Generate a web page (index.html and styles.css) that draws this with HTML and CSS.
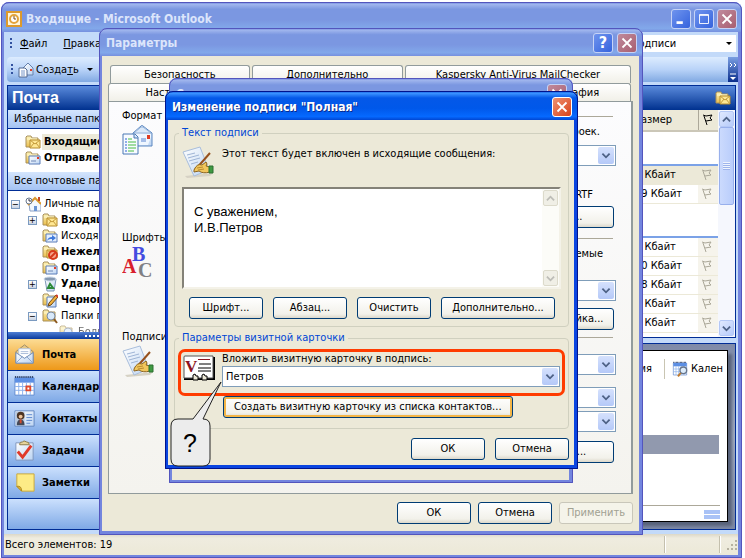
FILE: index.html
```
<!DOCTYPE html>
<html lang="ru">
<head>
  <meta charset="utf-8">
  <title>Входящие - Microsoft Outlook</title>
  <link rel="stylesheet" href="styles.css">
</head>
<body>
  <svg class="sprite" aria-hidden="true">
    <defs>
      <linearGradient id="gFolder" x1="0" y1="0" x2="0" y2="1"><stop offset="0" stop-color="#fdf3b8"/><stop offset="1" stop-color="#e9bd4c"/></linearGradient>
      <linearGradient id="gPaper" x1="0" y1="0" x2="1" y2="1"><stop offset="0" stop-color="#ffffff"/><stop offset="1" stop-color="#bcd4f2"/></linearGradient>
    </defs>
    <symbol id="i-folder" viewBox="0 0 16 16">
      <path d="M1 13V3l1-1h4l1 2h6v9z" fill="url(#gFolder)" stroke="#a8905c"/>
      <path d="M2 5h10" stroke="#fff8d0"/>
    </symbol>
    <symbol id="i-inbox" viewBox="0 0 16 16">
      <use href="#i-folder"/>
      <path d="M5 6h10v8H5z" fill="#ffe793" stroke="#b58a2a"/>
      <path d="M5 6l5 4 5-4M5 14l4-5M15 14l-4-5" fill="none" stroke="#c49a3a"/>
    </symbol>
    <symbol id="i-sent" viewBox="0 0 16 16">
      <use href="#i-folder"/>
      <path d="M4 6h11v8H4z" fill="url(#gPaper)" stroke="#5b7db8"/>
      <path d="M12 7h2v2h-2z" fill="#e0402a"/>
      <path d="M6 11h5" stroke="#6d86b5"/>
    </symbol>
    <symbol id="i-outbox" viewBox="0 0 16 16">
      <use href="#i-folder"/>
      <path d="M4 6h11v8H4z" fill="#e4effd" stroke="#5b7db8"/>
      <path d="M5 13c1-3 2-4 5-4V7l4 3-4 3v-2c-2 0-3 0-5 2z" fill="#3f79dc"/>
    </symbol>
    <symbol id="i-junk" viewBox="0 0 16 16">
      <use href="#i-inbox"/>
      <circle cx="11" cy="11" r="4" fill="#f6a58d" stroke="#d63a1c" stroke-width="2"/>
      <path d="M8 14l6-6" stroke="#d63a1c" stroke-width="2"/>
    </symbol>
    <symbol id="i-trash" viewBox="0 0 16 16">
      <path d="M3 3h11l-2 12H5z" fill="url(#gPaper)" stroke="#7d96b8"/>
      <ellipse cx="8" cy="3" rx="6" ry="2" fill="#8699b2" stroke="#c9d8ea"/>
      <path d="M6 12l2-4 3 4z" fill="none" stroke="#2d8a3a" stroke-width="2"/>
    </symbol>
    <symbol id="i-draft" viewBox="0 0 16 16">
      <use href="#i-folder"/>
      <path d="M5 5h9v10H5z" fill="url(#gPaper)" stroke="#5b7db8"/>
      <path d="M14 3l2 2-7 8-3 1 1-3z" fill="#f2b13c" stroke="#6d4a1a"/>
      <path d="M14 3l2 2" stroke="#d23c2a" stroke-width="2"/>
    </symbol>
    <symbol id="i-search" viewBox="0 0 16 16">
      <use href="#i-folder"/>
      <circle cx="9" cy="8" r="4" fill="#d8e9fb" stroke="#7b8ba0"/>
      <path d="M12 11l3 4" stroke="#8c5a20" stroke-width="2"/>
    </symbol>
    <symbol id="i-home" viewBox="0 0 16 16">
      <path d="M4 8l6-6 6 6v7H5z" fill="#f4f8ff" stroke="#8aa0c4"/>
      <path d="M3 9l7-7 6 6" fill="none" stroke="#dc9a2e" stroke-width="2"/>
      <path d="M9 10h3v5H9z" fill="#6a94d4"/>
      <path d="M13 1h2v4h-2z" fill="#c84a28"/>
      <circle cx="4" cy="5" r="3" fill="#fff" stroke="#66758c"/>
      <path d="M4 3v2h2" fill="none" stroke="#334"/>
    </symbol>
    <symbol id="i-newmail" viewBox="0 0 16 16">
      <path d="M5 6l5-5 5 5v7H5z" fill="url(#gPaper)" stroke="#6681ac"/>
      <path d="M12 7h2v2h-2z" fill="#e0402a"/>
      <path d="M1 6h6l2 2v7H1z" fill="#fff" stroke="#4e6791"/>
      <path d="M3 9h4M3 11h4M3 13h4" stroke="#7796c8"/>
    </symbol>
    <symbol id="i-format" viewBox="0 0 32 32">
      <path d="M11 9l8-7q1-1 2 0l9 7v13H11z" fill="url(#gPaper)" stroke="#5c87c0"/>
      <path d="M12 9l7-6h2l8 6z" fill="#dbe8f8" stroke="#92b2da"/>
      <path d="M12 10h17v3l-3 8H12z" fill="#eff6ff"/>
      <path d="M25 11h3v4h-3z" fill="#e03c22"/>
      <path d="M19 15h5M19 17h5" stroke="#5b83cf"/>
      <path d="M1 10h12l3 3v17H1z" fill="#f8fbff" stroke="#4b78b4"/>
      <path d="M12 10v4h4" fill="#cfe0f5" stroke="#4b78b4"/>
      <path d="M3 15h2M3 18h2M3 21h2M3 24h2M3 27h2" stroke="#2a62d4"/>
      <path d="M6 15h4M6 18h8M6 21h8M6 24h8M6 27h6" stroke="#49bd43"/>
    </symbol>
    <symbol id="i-sign" viewBox="0 0 32 32">
      <path d="M3 30L31 27 28 30 5 32z" fill="#d6d2c4"/>
      <path d="M1 6L18 1l9 23-15 6z" fill="url(#gPaper)" stroke="#a9bedb"/>
      <path d="M5 9l8-2M6 12l11-3M7 15l11-3M9 18l7-2" stroke="#9fb5d6"/>
      <path d="M28 7L13 24" stroke="#96501c" stroke-width="2"/>
      <path d="M12 24q3-7 8-5l4-3q2 2 0 4l4 1v5q-7 2-11-1l-5 1z" fill="#f1c65c" stroke="#8c6420"/>
      <path d="M15 22l6-1M16 24l6-1" stroke="#b98a30"/>
      <path d="M27 20h4v7h-4z" fill="#3f9a42" stroke="#2c6e30"/>
    </symbol>
    <symbol id="i-mail" viewBox="0 0 24 24">
      <path d="M3 9l9-7 9 7v12H3z" fill="#e6c886" stroke="#9b8a68"/>
      <path d="M6 6h12v10H6z" fill="#fff" stroke="#b9c7dc"/>
      <path d="M8 9h8M8 11h8" stroke="#a9bbd8"/>
      <path d="M3 10l9 6 9-6v11H3z" fill="url(#gPaper)" stroke="#6f8bb5"/>
      <path d="M3 21l7-7M21 21l-7-7" stroke="#8ba6ce"/>
    </symbol>
    <symbol id="i-cal" viewBox="0 0 24 24">
      <path d="M2 3h20v18H2z" fill="#fff" stroke="#5f8ad0"/>
      <path d="M2 3h20v5H2z" fill="#5c8fe4"/>
      <path d="M2 2h20" stroke="#26375c" stroke-width="2" stroke-dasharray="1 1"/>
      <path d="M6 8v13M10 8v13M14 8v13M18 8v13M2 12h20M2 16h20" stroke="#8db2ec"/>
      <path d="M14 12h4v4h-4z" fill="#fff" stroke="#e0482a" stroke-width="2"/>
    </symbol>
    <symbol id="i-contact" viewBox="0 0 24 24">
      <path d="M2 4h20v16H2z" fill="url(#gPaper)" stroke="#6287c0"/>
      <path d="M3 5h9v14H3z" fill="#b8c9df"/>
      <circle cx="8" cy="9" r="4" fill="#4d3524"/>
      <circle cx="8" cy="10" r="2" fill="#edc39a"/>
      <path d="M4 19q0-6 4-6t4 6z" fill="#444a58"/>
      <path d="M7 13h2v4H7z" fill="#d44a2a"/>
      <path d="M14 8h6M14 11h6M14 14h6M14 17h4" stroke="#5f8ad0"/>
    </symbol>
    <symbol id="i-task" viewBox="0 0 24 24">
      <path d="M3 4h18v18H3z" fill="url(#gPaper)" stroke="#7f97bd"/>
      <path d="M7 5q0-2 3-2 1-2 4 0 3 0 3 3H7z" fill="#e6d49a" stroke="#8c7a48"/>
      <path d="M5 13l5 6L19 7" fill="none" stroke="#e03a2a" stroke-width="3"/>
    </symbol>
    <symbol id="i-note" viewBox="0 0 24 24">
      <path d="M4 3h18v18H9l-5-5z" fill="#fdeb86" stroke="#caa73a"/>
      <path d="M4 16q5-1 5 5z" fill="#e2b932" stroke="#b08a22"/>
    </symbol>
    <symbol id="i-flag" viewBox="0 0 12 12">
      <path d="M1 1l3 1 6-1-2 3 2 2-6 1M2 2l3 9" fill="none" stroke="currentColor"/>
    </symbol>
    <symbol id="i-chev" viewBox="0 0 10 10">
      <path d="M1 3l4 4 4-4" fill="none" stroke="#4d6185" stroke-width="2"/>
    </symbol>
    <symbol id="i-x" viewBox="0 0 20 20">
      <path d="M5 5l10 10M15 5L5 15" stroke="#fff" stroke-width="2"/>
    </symbol>
  </svg>

  <div class="desktop">
    <!-- main Outlook window -->
    <div class="window outlook">
      <div class="titlebar">
        <svg class="app-icon" viewBox="0 0 16 16"><rect x="1" y="1" width="14" height="14" fill="#fff6dc" stroke="#dd9a2c" stroke-width="2"/><circle cx="8" cy="8" r="4" fill="#fff" stroke="#e3a43c" stroke-width="2"/><path d="M8 5v3h2" fill="none" stroke="#7a4a10"/></svg>
        <h1>Входящие - Microsoft Outlook</h1>
        <button class="sysbtn" aria-label="Свернуть"><svg viewBox="0 0 20 20"><path d="M5 14h7" stroke="#fff" stroke-width="3"/></svg></button>
        <button class="sysbtn" aria-label="Развернуть"><svg viewBox="0 0 20 20"><path d="M5 5h10v10H5zM5 6h10" fill="none" stroke="#fff"/></svg></button>
        <button class="sysbtn close" aria-label="Закрыть"><svg viewBox="0 0 20 20"><use href="#i-x"/></svg></button>
      </div>
      <div class="menubar">
        <span class="handle"></span>
        <a href="#"><u>Ф</u>айл</a>
        <a href="#"><u>П</u>равка</a>
        <div class="question">
          <input type="text" value="подписи" aria-label="Введите вопрос">
          <span class="tri"></span>
        </div>
      </div>
      <div class="toolbar">
        <span class="handle"></span>
        <button class="tool"><svg class="ico16"><use href="#i-newmail"/></svg><span>Созда<u>т</u>ь</span></button>
        <span class="tri"></span>
        <svg class="more" viewBox="0 0 10 25"><path d="M2 6l2 2-2 2M6 6l2 2-2 2" fill="none" stroke="#fff"/><path d="M2 17h6" stroke="#fff"/><path d="M2 20h6l-3 3z" fill="#fff"/></svg>
      </div>

      <div class="workspace">
        <div class="sidebar">
          <h2>Почта</h2>
          <h3>Избранные папки</h3>
          <ul class="favorites">
            <li class="current"><svg class="ico16"><use href="#i-inbox"/></svg><b>Входящие</b></li>
            <li><svg class="ico16"><use href="#i-sent"/></svg><b>Отправленные</b></li>
          </ul>
          <h3>Все почтовые папки</h3>
          <ul class="tree">
            <li class="root"><button class="toggle" aria-label="Свернуть">−</button><svg class="ico16"><use href="#i-home"/></svg>Личные папки</li>
            <li><button class="toggle" aria-label="Развернуть">+</button><svg class="ico16"><use href="#i-inbox"/></svg><b>Входящие</b></li>
            <li class="leaf"><svg class="ico16"><use href="#i-outbox"/></svg>Исходящие</li>
            <li class="leaf"><svg class="ico16"><use href="#i-junk"/></svg><b>Нежелательная</b></li>
            <li class="leaf"><svg class="ico16"><use href="#i-sent"/></svg><b>Отправленные</b></li>
            <li><button class="toggle" aria-label="Развернуть">+</button><svg class="ico16"><use href="#i-trash"/></svg><b>Удаленные</b></li>
            <li class="leaf"><svg class="ico16"><use href="#i-draft"/></svg><b>Черновики</b></li>
            <li><button class="toggle" aria-label="Свернуть">−</button><svg class="ico16"><use href="#i-search"/></svg>Папки поиска</li>
            <li class="deep"><svg class="ico16"><use href="#i-search"/></svg>Большие</li>
          </ul>
          <div class="splitter"></div>
          <nav>
            <a href="#" class="active"><svg><use href="#i-mail"/></svg>Почта</a>
            <a href="#"><svg><use href="#i-cal"/></svg>Календарь</a>
            <a href="#"><svg><use href="#i-contact"/></svg>Контакты</a>
            <a href="#"><svg><use href="#i-task"/></svg>Задачи</a>
            <a href="#"><svg><use href="#i-note"/></svg>Заметки</a>
          </nav>
          <div class="nav-foot"></div>
        </div>

        <div class="content">
          <div class="pane list-pane">
            <div class="pane-head"><svg class="ico16"><use href="#i-inbox"/></svg></div>
            <div class="list">
              <table>
                <thead>
                  <tr><th>Размер</th><th class="flag"><svg><use href="#i-flag"/></svg></th></tr>
                </thead>
                <tbody>
                  <tr class="group"><td colspan="2"></td></tr>
                  <tr class="selected"><td>5 Кбайт</td><td class="flag"><svg><use href="#i-flag"/></svg></td></tr>
                  <tr><td>19 Кбайт</td><td class="flag"><svg><use href="#i-flag"/></svg></td></tr>
                  <tr class="group"><td colspan="2"></td></tr>
                  <tr><td>5 Кбайт</td><td class="flag"><svg><use href="#i-flag"/></svg></td></tr>
                  <tr><td>10 Кбайт</td><td class="flag"><svg><use href="#i-flag"/></svg></td></tr>
                  <tr><td>18 Кбайт</td><td class="flag"><svg><use href="#i-flag"/></svg></td></tr>
                  <tr><td>5 Кбайт</td><td class="flag"><svg><use href="#i-flag"/></svg></td></tr>
                  <tr><td>5 Кбайт</td><td class="flag"><svg><use href="#i-flag"/></svg></td></tr>
                </tbody>
              </table>
              <div class="scroll">
                <span class="sb up"><svg><use href="#i-chev"/></svg></span>
                <span class="thumb"></span>
                <span class="sb"><svg><use href="#i-chev"/></svg></span>
              </div>
            </div>
          </div>
          <div class="pane reading">
            <div class="page">
              <div class="page-tools">
                <span>Время</span>
                <i></i>
                <svg class="ico16" viewBox="0 0 24 24"><use href="#i-cal"/><circle cx="17" cy="14" r="5" fill="#dcecfb" stroke="#66758c" stroke-width="2"/><path d="M13 18l-4 5" stroke="#c07a2a" stroke-width="3"/></svg>
                <span>Кален</span>
              </div>
              <div class="band"></div>
              <div class="page-foot"><i></i><i></i></div>
            </div>
          </div>
        </div>
      </div>

      <div class="statusbar">
        <span>Всего элементов: 19</span>
        <i class="sep"></i><i class="sep"></i>
        <svg class="grip" viewBox="0 0 12 12"><path d="M9 2h2M5 6h2M9 6h2M1 10h2M5 10h2M9 10h2" stroke="#b5b1a0" stroke-width="2"/></svg>
      </div>
    </div>

    <!-- options dialog -->
    <div class="window options">
      <div class="titlebar">
        <h1>Параметры</h1>
        <button class="sysbtn" aria-label="Справка"><b>?</b></button>
        <button class="sysbtn close" aria-label="Закрыть"><svg viewBox="0 0 20 20"><use href="#i-x"/></svg></button>
      </div>
      <div class="dialog-body">
        <div class="tabs">
          <button>Безопасность</button>
          <button class="mid">Дополнительно</button>
          <button class="wide">Kaspersky Anti-Virus MailChecker</button>
        </div>
        <div class="tabs second">
          <button>Настройка</button>
          <button>Почта</button>
          <button>Сообщение</button>
          <button>Орфография</button>
        </div>
        <div class="tab-page">
          <section>
            <h4>Формат сообщения</h4>
            <div class="row">
              <svg class="ico32"><use href="#i-format"/></svg>
              <div class="fields">
                <label class="note" for="fmt">настроек.</label>
                <span class="combo short"><select id="fmt"><option></option></select><svg><use href="#i-chev"/></svg></span>
                <p class="note rtf">RTF</p>
                <button class="btn">Шрифт...</button>
              </div>
            </div>
          </section>
          <section>
            <h4>Шрифты</h4>
            <div class="row">
              <svg class="ico32 abc" viewBox="0 0 32 32" aria-hidden="true">
                <text class="blue" x="10" y="15">B</text>
                <text class="gray" x="16" y="31">C</text>
                <text class="red" x="0" y="27">A</text>
              </svg>
              <div class="fields">
                <label class="note used" for="fnt">используемые</label>
                <span class="combo short"><select id="fnt"><option></option></select><svg><use href="#i-chev"/></svg></span>
                <button class="btn setup">Настройка...</button>
              </div>
            </div>
          </section>
          <section>
            <h4>Подписи</h4>
            <div class="row">
              <svg class="ico32"><use href="#i-sign"/></svg>
              <div class="fields signs">
                <span class="combo short"><select aria-label="Учетная запись"><option></option></select><svg><use href="#i-chev"/></svg></span>
                <span class="combo short first"><select aria-label="Новые сообщения"><option></option></select><svg><use href="#i-chev"/></svg></span>
                <span class="combo short"><select aria-label="Ответы и пересылка"><option></option></select><svg><use href="#i-chev"/></svg></span>
                <button class="btn">Подписи...</button>
              </div>
            </div>
          </section>
        </div>
        <div class="buttons">
          <button class="btn">ОК</button>
          <button class="btn">Отмена</button>
          <button class="btn" disabled>Применить</button>
        </div>
      </div>
    </div>

    <!-- signature list, mostly covered -->
    <div class="window signatures">
      <div class="titlebar">
        <h1>Создание</h1>
        <button class="sysbtn close" aria-label="Закрыть"><svg viewBox="0 0 20 20"><use href="#i-x"/></svg></button>
      </div>
      <div class="dialog-body"></div>
    </div>

    <!-- edit signature -->
    <div class="window edit">
      <div class="titlebar">
        <h1>Изменение подписи "Полная"</h1>
        <button class="sysbtn close" aria-label="Закрыть"><svg viewBox="0 0 20 20"><use href="#i-x"/></svg></button>
      </div>
      <div class="dialog-body">
        <fieldset class="text-group">
          <legend>Текст подписи</legend>
          <div class="row">
            <svg class="ico32"><use href="#i-sign"/></svg>
            <label for="sign">Этот текст будет включен в исходящие сообщения:</label>
          </div>
          <div class="editor">
            <textarea id="sign">С уважением,
И.В.Петров</textarea>
            <div class="scroll off">
              <span class="sb up"><svg><use href="#i-chev"/></svg></span>
              <span class="track"></span>
              <span class="sb"><svg><use href="#i-chev"/></svg></span>
            </div>
          </div>
          <div class="btn-row">
            <button class="btn">Шрифт...</button>
            <button class="btn">Абзац...</button>
            <button class="btn">Очистить</button>
            <button class="btn grow">Дополнительно...</button>
          </div>
        </fieldset>
        <fieldset class="card-group">
          <legend>Параметры визитной карточки</legend>
          <div class="highlight">
            <svg class="vcard" viewBox="0 0 32 26" aria-hidden="true">
              <path d="M31 2v22H1" fill="none" stroke="#000" stroke-width="2"/>
              <path d="M1 2q0-1 1-1h28v22H1z" fill="#fff" stroke="#555"/>
              <path d="M10 25v-5l2-1 1 2h2v4zM19 25v-5l2-1 1 2h2v4z" fill="#ece9d8" stroke="#000"/>
              <text x="2" y="17">V</text>
              <path d="M15 5l1-1 1 1 1-1 1 1 1-1 1 1 1-1 1 1 1-1 1 1 1-1 1 1" fill="none" stroke="#8c1420"/>
              <path d="M16 9h12M15 13h13M15 16h13" stroke="#000"/>
            </svg>
            <div class="card-field">
              <label for="card">Вложить визитную карточку в подпись:</label>
              <span class="combo"><select id="card"><option>Петров</option></select><svg><use href="#i-chev"/></svg></span>
            </div>
          </div>
          <button class="btn default">Создать визитную карточку из списка контактов...</button>
        </fieldset>
        <div class="buttons">
          <button class="btn">ОК</button>
          <button class="btn">Отмена</button>
        </div>
      </div>
      <div class="callout">
        <svg viewBox="0 0 54 86"><path d="M8 38H23L51 1 33 38Q40 38 40 45V78Q40 85 33 85H8Q1 85 1 78V45Q1 38 8 38z" fill="#ececec" stroke="#222"/></svg>
        <span>?</span>
      </div>
    </div>
  </div>
</body>
</html>
```
FILE: styles.css
```
* {
  margin: 0;
  padding: 0;
  box-sizing: border-box;
}

body {
  font-family: "DejaVu Sans Condensed", "DejaVu Sans", sans-serif;
  font-size: 11px;
  line-height: 16px;
  color: #000;
  background: #fff;
}

button, input, select, textarea {
  font: inherit;
  color: inherit;
  border: 0;
  background: none;
}

a {
  color: inherit;
  text-decoration: none;
}

ul {
  list-style: none;
}

h1, h2, h3, h4, p {
  font-size: inherit;
  font-weight: normal;
}

svg {
  display: block;
  flex: none;
}

.sprite {
  position: absolute;
  width: 0;
  height: 0;
}

.ico16 { width: 16px; height: 16px; }
.ico32 { width: 32px; height: 32px; }

.abc { font: bold 20px "Liberation Serif", serif; }
.abc .blue { fill: #444ce0; }
.abc .gray { fill: #808084; }
.abc .red { fill: #d8202c; }

.desktop {
  position: relative;
  min-height: 100vh;
  padding: 2px 3px 1px 1px;
  display: flex;
  overflow: hidden;
}

/* windows */
.window {
  border: solid #7385de;
  border-width: 0 4px 4px 3px;
  border-radius: 8px 8px 0 0;
  outline: 1px solid #5355bd;
  outline-offset: -1px;
  background: #ece9d8;
}

.titlebar {
  display: flex;
  align-items: center;
  gap: 4px;
  height: 29px;
  margin: 0 -4px 0 -3px;
  padding: 2px 6px 0 7px;
  border-radius: 8px 8px 0 0;
  background: linear-gradient(#6680dc, #9fb5ed 8%, #7b97e1 24%, #7b97e1 60%, #82a8ea 88%, #7690de);
}

.titlebar h1 {
  flex: 1;
  font-size: 12px;
  font-weight: bold;
  color: #dce5fb;
  white-space: nowrap;
}

.sysbtn {
  width: 20px;
  height: 20px;
  border: 1px solid #c6d3f6;
  border-radius: 3px;
  background: linear-gradient(135deg, #6f94ee, #3563dd);
  color: #fff;
  font-size: 16px;
}

.sysbtn svg {
  width: 18px;
  height: 18px;
}

.sysbtn.close {
  background: linear-gradient(135deg, #c08a9c, #a85f70);
}

/* outlook */
.outlook {
  flex: 1;
  min-width: 0;
  display: flex;
  flex-direction: column;
  border-bottom-width: 3px;
  background: #c3daf9;
}

.outlook > .titlebar {
  height: 30px;
  padding: 4px 5px 0 5px;
}

.outlook .sysbtn { margin-left: -1px; }

.app-icon { width: 16px; height: 16px; }

.menubar {
  display: flex;
  align-items: center;
  height: 25px;
  padding: 0 2px 2px 6px;
  gap: 16px;
  background: #c3daf9;
}

.menubar .handle { margin-right: -8px; }

.handle {
  width: 2px;
  height: 12px;
  background: repeating-linear-gradient(#31519f 0 2px, transparent 2px 4px);
}

.question {
  display: flex;
  align-items: center;
  width: 110px;
  height: 17px;
  margin-left: auto;
  padding: 0 4px 0 6px;
  background: #fff;
}

.question input {
  flex: 1;
  min-width: 0;
}

.tri {
  border: 3px solid transparent;
  border-top-color: #000;
  border-bottom: 0;
}

.toolbar {
  display: flex;
  align-items: center;
  gap: 5px;
  height: 25px;
  margin-left: 3px;
  padding-left: 4px;
  border-radius: 4px 0 0 4px;
  background: linear-gradient(#ddecfe, #b9d3f8 50%, #81a9e2);
}

.tool {
  display: flex;
  align-items: center;
  gap: 2px;
  padding-right: 3px;
}

.toolbar .more {
  width: 10px;
  height: 25px;
  margin-left: auto;
  background: linear-gradient(#7a9fe2, #0a2d8c);
}

.workspace {
  flex: 1;
  display: grid;
  grid-template-columns: 190px 1fr;
  gap: 5px;
  padding: 3px 2px 4px 3px;
}

.sidebar, .pane {
  border: 1px solid #002d96;
}

.sidebar {
  display: flex;
  flex-direction: column;
  background: #fff;
}

.sidebar h2, .pane-head {
  height: 24px;
  background: linear-gradient(#5a8adb, #00318f);
}

.sidebar h2 {
  padding-left: 4px;
  font: bold 16px/24px "Liberation Sans", Arial, sans-serif;
  color: #fff;
}

.sidebar h3 {
  height: 19px;
  padding: 1px 6px 0;
  border-bottom: 1px solid #002d96;
  background: linear-gradient(#d4e5fd, #a4c3f3);
}

.favorites {
  padding: 5px 0 6px 17px;
}

.favorites li, .tree li {
  display: flex;
  align-items: center;
  height: 16px;
  white-space: nowrap;
}

.favorites b {
  margin-left: 1px;
  padding-left: 2px;
}

.favorites .current b {
  flex: 1;
  background: #ece9d8;
}

.tree {
  flex: 1 1 0;
  min-height: 141px;
  padding-top: 5px;
  overflow: hidden;
}

.tree li {
  gap: 3px;
  padding-left: 20px;
}

.tree li.root { padding-left: 3px; }
.tree li.leaf { padding-left: 34px; }
.tree li.deep { padding-left: 51px; opacity: 0.6; }

.toggle {
  width: 9px;
  height: 9px;
  margin-right: 2px;
  border: 1px solid #7b9ac0;
  background: linear-gradient(#fff, #c9d3e2);
  font-size: 9px;
  line-height: 7px;
}

.splitter {
  height: 7px;
  background:
    repeating-linear-gradient(90deg, #fff 0 2px, transparent 2px 4px) center / 34px 2px no-repeat,
    linear-gradient(#4f7fd4, #0b3a9c);
}

.sidebar nav a {
  display: flex;
  align-items: center;
  gap: 6px;
  height: 32px;
  padding-left: 5px;
  border-bottom: 1px solid #002d96;
  background: linear-gradient(#cbe0fd, #7fa9e6);
  font-weight: bold;
}

.sidebar nav svg {
  width: 23px;
  height: 23px;
}

.sidebar nav a.active {
  background: linear-gradient(#fcdc94, #ee9818);
}

.nav-foot {
  height: 30px;
  background: linear-gradient(#cbe0fd, #7fa9e6);
}

.content {
  display: flex;
  flex-direction: column;
  gap: 5px;
  min-width: 0;
}

.pane-head {
  display: flex;
  align-items: center;
  justify-content: flex-end;
  padding-right: 4px;
}

.list {
  display: flex;
  min-height: 227px;
  background: #fff;
}

.list table {
  flex: 1;
  align-self: flex-start;
  border-collapse: collapse;
}

.list th {
  height: 21px;
  text-align: left;
  font-weight: normal;
  background: #ece9d8;
  border-bottom: 2px solid #cbc7b8;
}

.list td {
  height: 19px;
  border-bottom: 1px solid #ece9d8;
}

.list td:first-child, .list th:first-child {
  padding-left: 432px;
}

.list .flag {
  width: 20px;
  padding-left: 3px;
  background: #f6f4ec;
  color: #aaa798;
}

.list th.flag {
  border-left: 1px solid #aca899;
  background: #ece9d8;
  color: #000;
}

.flag svg {
  width: 12px;
  height: 12px;
}

.list .group td {
  height: 34px;
  border-bottom: 2px solid #7ba2e7;
}

.list .selected td { background: #ece9d8; }

.scroll {
  display: flex;
  flex-direction: column;
  width: 17px;
  padding: 1px;
  background: #f5f7fd;
}

.sb {
  display: flex;
  align-items: center;
  justify-content: center;
  height: 16px;
  border: 1px solid #b4c8f6;
  border-radius: 2px;
  background: linear-gradient(135deg, #e0e9fe, #b6cbfa);
}

.sb svg {
  width: 9px;
  height: 9px;
}

.sb.up svg { transform: rotate(180deg); }

.thumb {
  height: 78px;
  margin-bottom: auto;
  border: 1px solid #98b0ec;
  border-radius: 2px;
  background:
    repeating-linear-gradient(#eef4fe 0 1px, #9db4ec 1px 2px) center / 7px 8px no-repeat,
    linear-gradient(90deg, #cbdafd, #b9cdfb);
}

.reading {
  flex: 1;
  display: flex;
  padding: 6px 7px 7px;
  background: linear-gradient(#7f8ba8, #a3adc2 50%, #7e89a5);
}

.page {
  flex: 1;
  display: flex;
  flex-direction: column;
  border: 1px solid #000;
  background: #fff;
  box-shadow: 4px 4px 3px #58627a;
}

.page-tools {
  display: flex;
  align-items: center;
  justify-content: flex-end;
  gap: 3px;
  padding: 8px 4px 0 0;
}

.page-tools i {
  width: 1px;
  height: 20px;
  margin: 0 4px 0 9px;
  background: #c9c5b2;
}

.band {
  height: 19px;
  margin: 56px 8px auto 0;
  background: #9199ae;
}

.page-foot {
  margin-right: 7px;
  border-top: 1px solid #aca899;
  padding: 4px 0 1px;
}

.page-foot i {
  display: block;
  width: 16px;
  height: 4px;
  margin: 0 0 1px auto;
  background: #a9c2f6;
}

.statusbar {
  display: flex;
  align-items: center;
  height: 21px;
  padding-left: 1px;
  background: linear-gradient(#dcd8c8, #efecdf 20%, #ece9d8);
}

.statusbar span { flex: 1; }

.sep {
  width: 2px;
  height: 17px;
  margin-right: 53px;
  border-left: 1px solid #c4c0ae;
  border-right: 1px solid #fff;
}

.sep + .sep { margin-right: 5px; }

.grip {
  width: 12px;
  height: 12px;
}

/* buttons and combos shared by the dialogs */
.btn {
  min-width: 74px;
  height: 22px;
  padding: 0 6px;
  border: 1px solid #003c74;
  border-radius: 3px;
  background: linear-gradient(#fff, #f2f1ea 80%, #dcd8cb);
  white-space: nowrap;
}

.btn:disabled {
  border-color: #c9c7ba;
  background: #f5f4ea;
  color: #a1a192;
}

.btn.default {
  padding: 0 10px;
  box-shadow: inset 0 0 0 2px #f3b547;
}

.buttons {
  display: flex;
  justify-content: flex-end;
  gap: 7px;
}

.combo {
  display: flex;
  align-items: center;
  height: 21px;
  padding: 1px;
  border: 1px solid #7f9db9;
  background: #fff;
}

.combo select {
  flex: 1;
  align-self: stretch;
  padding-left: 2px;
  appearance: none;
}

.combo svg {
  width: 16px;
  height: 17px;
  padding: 4px 3px;
  border-radius: 2px;
  background: linear-gradient(#d5e1fd, #b5c9f8);
}

/* options */
.options {
  position: absolute;
  left: 99px;
  top: 28px;
  width: 544px;
}

.options > .titlebar { height: 28px; }

.options .dialog-body {
  padding: 9px 6px 7px;
}

.tabs {
  display: flex;
  gap: 2px;
  padding: 0 2px;
}

.tabs button {
  flex: 140 1 0;
  height: 18px;
  border: 1px solid #919b9c;
  border-bottom: 0;
  border-radius: 3px 3px 0 0;
  background: linear-gradient(#fff, #f1f0e8);
}

.tabs .mid { flex-grow: 152; }
.tabs .wide { flex-grow: 228; }

.tabs.second {
  gap: 0;
  padding: 0 2px 0 0;
}

.tab-page {
  height: 393px;
  padding: 6px 15px 0 13px;
  border: 1px solid #919b9c;
  border-right-width: 2px;
  background: linear-gradient(#fcfcfe, #f4f3ee);
}

.tab-page h4 {
  display: flex;
  align-items: center;
  gap: 6px;
}

.tab-page h4::after {
  content: "";
  flex: 1;
  height: 1px;
  margin-right: 3px;
  background: #aca899;
}

.tab-page section:nth-child(1) { height: 122px; }
.tab-page section:nth-child(2) { height: 99px; }

.row { display: flex; }

.fields {
  flex: 1;
  display: flex;
  flex-direction: column;
  align-items: flex-end;
}

.short { width: 140px; }

.fields .btn {
  width: 110px;
  margin-right: 2px;
}

.note {
  margin: 0 16px 5px 0;
}

.note.rtf { margin: 21px 23px 3px 0; }
.note.used { margin: 0 13px 18px 0; }

.fields .setup {
  width: 86px;
  margin-top: 7px;
}

.signs { padding-top: 9px; gap: 3px; }
.signs .first { margin-top: 9px; }
.signs .btn { margin-top: 6px; }

.options .buttons {
  padding-top: 8px;
}

/* signature list */
.signatures {
  position: absolute;
  left: 169px;
  top: 78px;
  width: 404px;
  border-bottom-width: 3px;
}

.signatures .dialog-body { height: 373px; }

/* edit signature */
.edit {
  position: absolute;
  left: 165px;
  top: 91px;
  width: 413px;
  border-color: #0a45e0;
  outline-color: #00138c;
}

.edit > .titlebar {
  background: linear-gradient(#0a50d8, #3b93ff 8%, #0458e8 24%, #0058ea 60%, #0569ff 88%, #0046d2);
}

.edit > .titlebar h1 {
  color: #fff;
  text-shadow: 1px 1px #0a2a8c;
}

.edit .sysbtn.close {
  border-color: #fff;
  background: linear-gradient(135deg, #ee9272, #d9421a);
}

.edit .dialog-body {
  padding: 5px 5px 5px 6px;
}

.edit fieldset {
  margin: 0 0 3px;
  border: 1px solid #d0d0bf;
  border-radius: 4px;
}

.edit legend {
  padding: 0 3px;
  color: #0046d5;
}

.text-group {
  padding: 0 7px 7px;
}

.text-group legend { margin-left: -3px; }

.text-group .row {
  gap: 8px;
  padding: 5px 0 9px;
}

.editor {
  display: flex;
  height: 102px;
  border: 2px solid;
  border-color: #848278 #f4f2e8 #f4f2e8 #848278;
  background: #fff;
}

.editor textarea {
  flex: 1;
  padding: 15px 10px;
  resize: none;
  outline: 0;
  font: 13px/16px "Liberation Sans", Arial, sans-serif;
}

.scroll.off { background: #fcfcf8; }

.scroll.off .sb {
  border-color: #dcdacb;
  background: #f0efe6;
}

.scroll.off .sb svg { filter: grayscale(1) opacity(0.35); }

.track { flex: 1; }

.btn-row {
  display: flex;
  gap: 10px;
  padding: 8px 6px 0 7px;
}

.btn-row .grow { flex: 1; }

.card-group { padding: 0 3px 10px; }

.card-group legend { margin-left: 1px; }

.highlight {
  display: flex;
  gap: 7px;
  margin-top: 3px;
  padding: 0 2px 6px;
  border: 3px solid #ff3c00;
  border-radius: 7px;
}

.vcard {
  width: 32px;
  height: 26px;
  margin-top: 3px;
}

.vcard text {
  font: bold 17px "Liberation Serif", serif;
  fill: #8c1420;
}

.card-field { flex: 1; }

.card-field label { display: block; line-height: 14px; }

.card-group .btn { margin-left: 45px; }

.edit .buttons {
  padding: 6px 0 0;
  gap: 10px;
}

.callout {
  position: absolute;
  left: 2px;
  bottom: -2px;
  width: 54px;
}

.callout svg {
  width: 54px;
  height: 86px;
}

.callout span {
  position: absolute;
  left: 0;
  bottom: 11px;
  width: 40px;
  text-align: center;
  font: 25px/26px "Liberation Sans", Arial, sans-serif;
}
```
